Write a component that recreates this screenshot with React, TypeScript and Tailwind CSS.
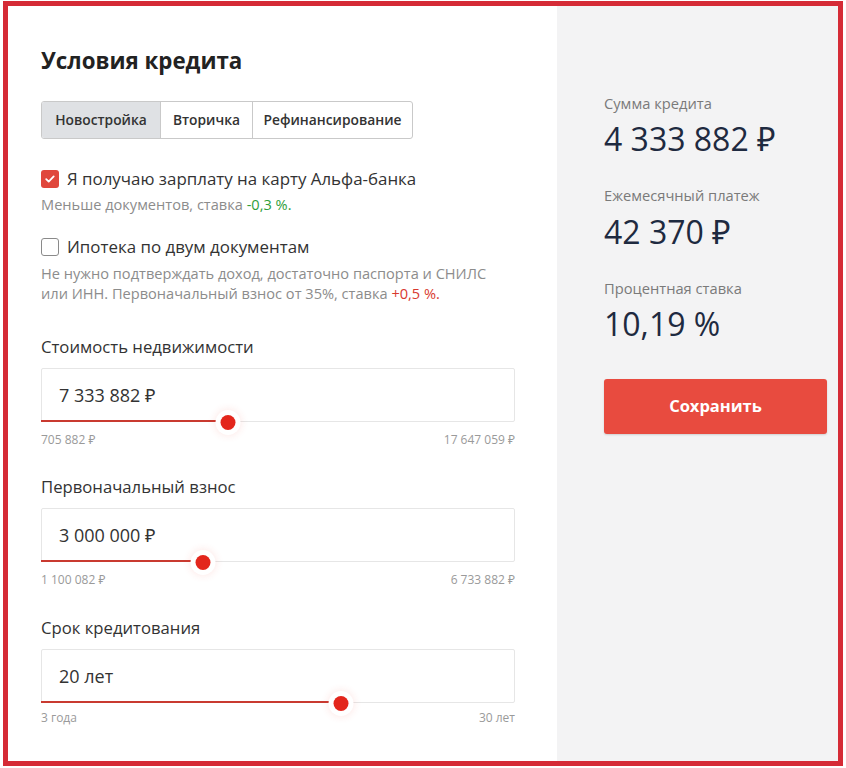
import React from "react";

const font = { fontFamily: '"Open Sans", "Noto Sans", sans-serif' };

interface SliderFieldProps {
  label: string;
  value: string;
  min: string;
  max: string;
  percent: number;
  top: string;
  rangeTop?: string;
}

function SliderField({ label, value, min, max, percent, top, rangeTop = "mt-[10px]" }: SliderFieldProps) {
  return (
    <div className={top}>
      <div className="text-[16.7px] leading-[24px] text-[#333]">{label}</div>
      <div className="relative mt-[9px] h-[54px] rounded-[2px] border border-[#e6e6e6] bg-white">
        <div className="pl-[17px] pt-[13px] text-[18px] leading-[26px] text-[#333]">{value}</div>
        {/* track */}
        <div
          className="absolute -bottom-px -left-px h-[2.5px] bg-[#c93a30]"
          style={{ width: `${percent}%` }}
        />
        <div
          className="absolute -bottom-[8.5px] h-[15px] w-[15px] -translate-x-1/2 rounded-full bg-[#e3261c] shadow-[0_0_0_5px_#fff,0_0_8px_5px_rgba(239,60,40,0.14)]"
          style={{ left: `${percent}%` }}
        />
      </div>
      <div className={`${rangeTop} flex justify-between text-[12px] leading-[16px] text-[#9a9a9a]`}>
        <span>{min}</span>
        <span>{max}</span>
      </div>
    </div>
  );
}

export default function App() {
  return (
    <div className="bg-white pl-[3px] pt-[1px]" style={font}>
      <div className="flex h-[765px] w-[840px] border-[5px] border-[#d52b36]">
        {/* Left: form */}
        <div className="w-[549px] bg-white pl-[33px] pr-[42px]">
          <h1 className="mt-[40px] text-[22.3px] font-bold leading-[30px] text-[#222]">
            Условия кредита
          </h1>

          <div className="mt-[25px] flex h-[38px] w-[372px] overflow-hidden rounded-[3px] border border-[#c9c9c9] text-[13.8px] font-semibold text-[#333]">
            <div className="flex w-[118px] items-center justify-center bg-[#dfe1e4]">Новостройка</div>
            <div className="flex w-[92px] items-center justify-center border-l border-[#c9c9c9]">Вторичка</div>
            <div className="flex flex-1 items-center justify-center border-l border-[#c9c9c9]">
              Рефинансирование
            </div>
          </div>

          <div className="mt-[28px] flex items-center gap-[8px]">
            <div className="flex h-[18px] w-[18px] items-center justify-center rounded-[3px] bg-[#e0473c]">
              <svg width="12" height="12" viewBox="0 0 12 12" fill="none">
                <path d="M2.2 6.2l2.5 2.4 5-5.2" stroke="#fff" strokeWidth="1.8" strokeLinecap="round" strokeLinejoin="round" />
              </svg>
            </div>
            <span className="text-[16.9px] leading-[24px] text-[#333]">Я получаю зарплату на карту Альфа-банка</span>
          </div>
          <div className="mt-[3px] text-[14.6px] leading-[20px] text-[#8c8c8c]">
            Меньше документов, ставка <span className="text-[#2f9e3a]">-0,3 %.</span>
          </div>

          <div className="mt-[21px] flex items-center gap-[8px]">
            <div className="h-[18px] w-[18px] rounded-[3px] border-[1.5px] border-[#8a8a8a] bg-white" />
            <span className="text-[16.9px] leading-[24px] text-[#333]">Ипотека по двум документам</span>
          </div>
          <div className="mt-[4px] text-[14.6px] leading-[20px] text-[#8c8c8c]">
            <div>Не нужно подтверждать доход, достаточно паспорта и СНИЛС</div>
            <div>
              или ИНН. Первоначальный взнос от 35%, ставка <span className="text-[#d8392e]">+0,5 %.</span>
            </div>
          </div>

          <SliderField
            top="mt-[32px]"
            label="Стоимость недвижимости"
            value="7 333 882 ₽"
            min="705 882 ₽"
            max="17 647 059 ₽"
            percent={39.5}
          />
          <SliderField
            top="mt-[27px]"
            label="Первоначальный взнос"
            value="3 000 000 ₽"
            min="1 100 082 ₽"
            max="6 733 882 ₽"
            percent={34.2}
          />
          <SliderField
            top="mt-[28px]"
            label="Срок кредитования"
            value="20 лет"
            min="3 года"
            max="30 лет"
            percent={63.3}
            rangeTop="mt-[7px]"
          />
        </div>

        {/* Right: summary */}
        <div className="flex-1 bg-[#f3f3f4] pl-[47px] pr-[10px]">
          <div className="mt-[87px] text-[14.7px] leading-[20px] text-[#7a7a7a]">Сумма кредита</div>
          <div className="mt-[6px] text-[32px] leading-[40px] text-[#1e2a40]">4 333 882 ₽</div>
          <div className="mt-[26px] text-[14.7px] leading-[20px] text-[#7a7a7a]">Ежемесячный платеж</div>
          <div className="mt-[7px] text-[32px] leading-[40px] text-[#1e2a40]">42 370 ₽</div>
          <div className="mt-[26px] text-[14.7px] leading-[20px] text-[#7a7a7a]">Процентная ставка</div>
          <div className="mt-[6px] text-[32px] leading-[40px] text-[#1e2a40]">10,19 %</div>
          <button className="mt-[35px] flex h-[55px] w-[223px] items-center justify-center rounded-[3px] bg-[#e84b3f] text-[16.5px] font-bold text-white shadow-[0_1px_2px_rgba(0,0,0,0.15)]">
            Сохранить
          </button>
        </div>
      </div>
    </div>
  );
}
